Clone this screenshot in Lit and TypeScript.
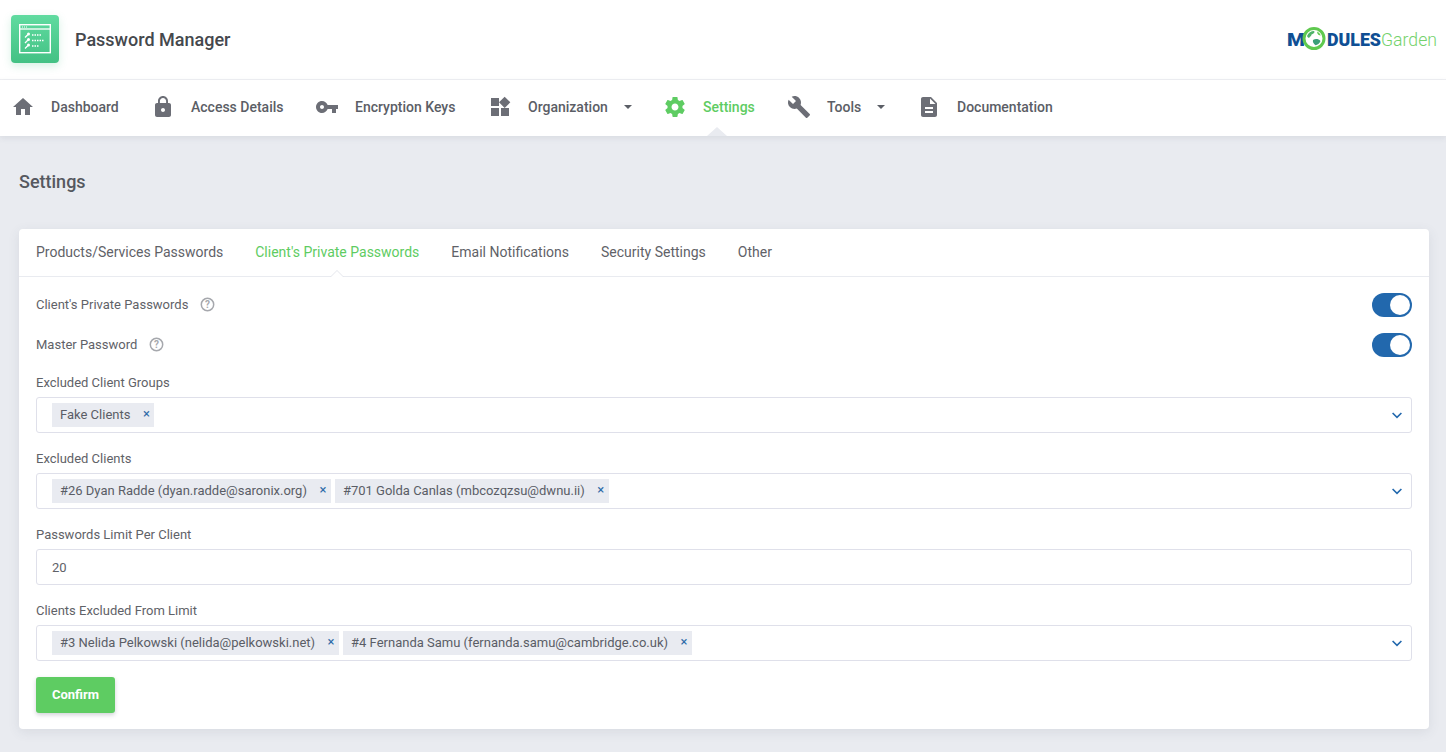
import { LitElement, html, css, svg } from "lit";
import { customElement } from "lit/decorators.js";

const navIcons: Record<string, any> = {
  home: svg`<path d="M10 20v-6h4v6h5v-8h3L12 3 2 12h3v8z"/>`,
  lock: svg`<path d="M18 8h-1V6c0-2.76-2.24-5-5-5S7 3.24 7 6v2H6c-1.1 0-2 .9-2 2v10c0 1.1.9 2 2 2h12c1.1 0 2-.9 2-2V10c0-1.1-.9-2-2-2zm-6 9c-1.1 0-2-.9-2-2s.9-2 2-2 2 .9 2 2-.9 2-2 2zm3.1-9H8.9V6c0-1.71 1.39-3.1 3.1-3.1 1.71 0 3.1 1.39 3.1 3.1v2z"/>`,
  key: svg`<path d="M12.65 10C11.83 7.67 9.61 6 7 6c-3.31 0-6 2.69-6 6s2.69 6 6 6c2.61 0 4.83-1.67 5.65-4H17v4h4v-4h2v-4H12.65zM7 14c-1.1 0-2-.9-2-2s.9-2 2-2 2 .9 2 2-.9 2-2 2z"/>`,
  widgets: svg`<path d="M13 13v8h8v-8h-8zM3 21h8v-8H3v8zM3 3v8h8V3H3zm13.66-1.31L11 7.34 16.66 13l5.66-5.66-5.66-5.65z"/>`,
  gear: svg`<path d="M19.43 12.98c.04-.32.07-.64.07-.98s-.03-.66-.07-.98l2.11-1.65c.19-.15.24-.42.12-.64l-2-3.46c-.12-.22-.39-.3-.61-.22l-2.49 1c-.52-.4-1.08-.73-1.69-.98l-.38-2.65C14.46 2.18 14.25 2 14 2h-4c-.25 0-.46.18-.49.42l-.38 2.65c-.61.25-1.17.59-1.69.98l-2.49-1c-.23-.09-.49 0-.61.22l-2 3.46c-.13.22-.07.49.12.64l2.11 1.65c-.04.32-.07.65-.07.98s.03.66.07.98l-2.11 1.65c-.19.15-.24.42-.12.64l2 3.46c.12.22.39.3.61.22l2.49-1c.52.4 1.08.73 1.69.98l.38 2.65c.03.24.24.42.49.42h4c.25 0 .46-.18.49-.42l.38-2.65c.61-.25 1.17-.59 1.69-.98l2.49 1c.23.09.49 0 .61-.22l2-3.46c.12-.22.07-.49-.12-.64l-2.11-1.65zM12 15.5c-1.93 0-3.5-1.57-3.5-3.5s1.57-3.5 3.5-3.5 3.5 1.57 3.5 3.5-1.57 3.5-3.5 3.5z"/>`,
  wrench: svg`<path d="M22.7 19l-9.1-9.1c.9-2.3.4-5-1.5-6.9-2-2-5-2.4-7.4-1.3L9 6 6 9 1.6 4.7C.4 7.1.9 10.1 2.9 12.1c1.9 1.9 4.6 2.4 6.9 1.5l9.1 9.1c.4.4 1 .4 1.4 0l2.3-2.3c.5-.4.5-1.1.1-1.4z"/>`,
  doc: svg`<path d="M14 2H6c-1.1 0-2 .9-2 2v16c0 1.1.9 2 2 2h12c1.1 0 2-.9 2-2V8l-6-6zm2 16H8v-2h8v2zm0-4H8v-2h8v2zm-3-5V3.5L18.5 9H13z"/>`,
};

const nav = [
  { icon: "home", label: "Dashboard", w: 140 },
  { icon: "lock", label: "Access Details", w: 164 },
  { icon: "key", label: "Encryption Keys", w: 173 },
  { icon: "widgets", label: "Organization", caret: true, w: 175 },
  { icon: "gear", label: "Settings", active: true, w: 124 },
  { icon: "wrench", label: "Tools", caret: true, w: 130 },
  { icon: "doc", label: "Documentation" },
];

const tabs = ["Products/Services Passwords", "Client's Private Passwords", "Email Notifications", "Security Settings", "Other"];

@customElement("app-root")
export class AppRoot extends LitElement {
  static styles = css`
    :host {
      display: flex;
      flex-direction: column;
      min-height: 752px;
      background: #e9ebf0;
      font-family: Roboto, "Liberation Sans", sans-serif;
      color: #5c5f66;
    }
    .top {
      height: 80px;
      box-sizing: border-box;
      background: #fff;
      border-bottom: 1px solid #eff0f3;
      display: flex;
      align-items: center;
      justify-content: space-between;
      padding: 0 2px 1px 11px;
    }
    .brand { display: flex; align-items: center; gap: 16px; }
    .app-icon {
      width: 48px;
      height: 48px;
      border-radius: 4px;
      background: linear-gradient(180deg, #60dba0, #43c184);
      box-shadow: 0 3px 8px rgba(70, 190, 130, .22);
      display: flex;
      align-items: center;
      justify-content: center;
    }
    .title { font-size: 18px; font-weight: 500; color: #45484d; }
    .mg { display: block; }
    .nav {
      height: 56px;
      box-sizing: border-box;
      background: #fff;
      display: flex;
      align-items: center;
      padding-left: 11px;
      box-shadow: 0 2px 6px rgba(70, 75, 95, .1);
      position: relative;
    }
    .nav-item {
      display: flex;
      align-items: center;
      height: 100%;
      box-sizing: border-box;
      padding-bottom: 2px;
      font-size: 14px;
      font-weight: 500;
      color: #5b5e66;
      position: relative;
      flex: none;
    }
    .nav-item svg.i { width: 24px; height: 24px; fill: #6c6e76; flex: none; margin-right: 16px; }
    .nav-item.active { color: #5ecc62; }
    .nav-item.active svg.i { fill: #5ecc62; }
    .nav-item.active::after {
      content: "";
      position: absolute;
      left: 44px;
      bottom: 0;
      border-left: 10px solid transparent;
      border-right: 10px solid transparent;
      border-bottom: 9px solid #e9ebf0;
    }
    .caret {
      width: 0;
      height: 0;
      margin-left: 16px;
      border-left: 4px solid transparent;
      border-right: 4px solid transparent;
      border-top: 4px solid #5b5e66;
    }
    .page-title {
      font-size: 18px;
      font-weight: 500;
      color: #55585f;
      margin: 0;
      padding: 35px 19px 0;
      line-height: 22px;
    }
    .card {
      margin: 36px 17px 0 19px;
      height: 500px;
      background: #fff;
      border-radius: 4px;
      box-shadow: 0 3px 12px rgba(70, 75, 95, .1);
      box-sizing: border-box;
    }
    .tabs {
      height: 48px;
      box-sizing: border-box;
      border-bottom: 1px solid #e9ebf0;
      display: flex;
      align-items: center;
      gap: 32px;
      padding-left: 17px;
      font-size: 14px;
      color: #5f6268;
    }
    .tab { position: relative; line-height: 47px; }
    .tab.active { color: #5ecc62; }
    .tab.active::after, .tab.active::before {
      content: "";
      position: absolute;
      left: calc(50% - 7px);
      width: 0;
      height: 0;
      border-left: 7px solid transparent;
      border-right: 7px solid transparent;
    }
    .tab.active::before { bottom: -1px; border-bottom: 7px solid #e4e6ec; }
    .tab.active::after { bottom: -2px; border-bottom: 7px solid #fff; }
    .body { padding: 0 17px; display: flex; flex-direction: column; font-size: 13px; color: #5f6268; }
    .sw-row { height: 40px; display: flex; align-items: center; justify-content: space-between; }
    .sw-row.first { margin-top: 8px; }
    .sw-row.last { margin-bottom: 10px; }
    .sw-label { display: flex; align-items: center; gap: 12px; padding-bottom: 2px; }
    .help { width: 15px; height: 15px; display: block; }
    .switch {
      width: 40px;
      height: 24px;
      border-radius: 12px;
      background: #2268ad;
      display: flex;
      align-items: center;
      justify-content: flex-end;
      padding-right: 2px;
      box-sizing: border-box;
    }
    .knob { width: 20px; height: 20px; background: #fff; border-radius: 50%; }
    .field-label { line-height: 16px; }
    .field { margin-bottom: 18px; display: flex; flex-direction: column; gap: 6px; }
    .control {
      height: 36px;
      box-sizing: border-box;
      border: 1px solid #dfe0ea;
      border-radius: 3px;
      display: flex;
      align-items: center;
      padding: 0 6px 0 15px;
      gap: 4px;
      background: #fff;
    }
    .control.input { color: #5f6268; }
    .chip {
      height: 24px;
      box-sizing: border-box;
      background: #e9ebf1;
      display: flex;
      align-items: center;
      padding: 0 0 2px 8px;
      font-size: 13px;
      color: #5a5d66;
      white-space: nowrap;
    }
    .chip .x { width: 16px; margin-left: 8px; text-align: center; color: #2c6aa8; font-size: 13px; line-height: 24px; font-weight: 400; }
    .chev { margin-left: auto; width: 16px; height: 16px; flex: none; }
    .btn {
      width: 79px;
      height: 36px;
      box-sizing: border-box;
      align-self: flex-start;
      margin-top: -2px;
      background: #5ecc62;
      border: 0;
      border-radius: 3px;
      color: #fff;
      font: 700 13px Roboto, "Liberation Sans", sans-serif;
      box-shadow: 0 2px 4px rgba(70, 75, 95, .25);
      padding: 0 0 2px;
    }
  `;

  private chips(list: string[]) {
    return list.map((c) => html`<span class="chip">${c}<span class="x">×</span></span>`);
  }

  private chevron() {
    return html`<svg class="chev" viewBox="0 0 16 16"><path d="M3.6 6l4.4 4.4L12.4 6" fill="none" stroke="#2268ad" stroke-width="1.6"/></svg>`;
  }

  private help() {
    return html`<svg class="help" viewBox="0 0 15 15"><circle cx="7.5" cy="7.5" r="6.2" fill="none" stroke="#a6a8ad" stroke-width="1.5"/><text x="7.5" y="11" text-anchor="middle" font-size="10" font-weight="700" fill="#a6a8ad" font-family="Roboto">?</text></svg>`;
  }

  private logo() {
    return html`<svg class="mg" width="160" height="26" viewBox="0 0 160 26">
      <text x="3" y="19.5" font-family="Roboto" font-weight="900" font-size="19" fill="#0f4f94" textLength="18" lengthAdjust="spacingAndGlyphs">M</text>
      <circle cx="30" cy="12.5" r="10" fill="#fff" stroke="#5fc94f" stroke-width="3"/>
      <path d="M23 10c1.500-3.500 4-5 7-5 1.500 1.500-1 3-2.500 3.500 0 2-1.500 1.500-2 3-1 .8-1.800 0-2.500-1.500z" fill="#4fb36a"/>
      <path d="M29 14c2.500-1.500 5.500-1.200 7.500 1-1 2.500-3 4-5 4.200-2-1.500-3-3-2.500-5.200z" fill="#3a9f78"/>
      <path d="M33 5.500c1.800.8 3 2 3.800 4-1.800 0-3.500-1-3.800-4z" fill="#5fc94f"/>
      <text x="43" y="19.500" font-family="Roboto" font-weight="900" font-size="19" fill="#0f4f94" textLength="54" lengthAdjust="spacingAndGlyphs">DULES</text>
      <text x="97" y="19.500" font-family="Roboto" font-weight="300" font-size="18" fill="#74d26c" textLength="56" lengthAdjust="spacingAndGlyphs">Garden</text>
    </svg>`;
  }

  render() {
    return html`
      <div class="top">
        <div class="brand">
          <div class="app-icon">
            <svg width="32" height="30" viewBox="0 0 32 30" fill="none" stroke="#fff">
              <rect x=".7" y=".7" width="30.600" height="28" stroke-width="1.400"/>
              <path d="M1 5h30" stroke-width="1.300"/>
              <path d="M3 3h6" stroke-width="1" stroke-dasharray="1 1"/>
              <g stroke-width="1.300">
                <path d="M6 13.500l3-3M6 19l3-3M6 24.500l3-3"/>
                <path d="M13 11h9M13 16.500h12M13 22h7" stroke-dasharray="1.500 1"/>
              </g>
              <g fill="#fff" stroke="none">
                <circle cx="9.500" cy="10" r="1.500"/>
                <circle cx="9.500" cy="15.500" r="1.500"/>
                <circle cx="9.500" cy="21" r="1.500"/>
              </g>
            </svg>
          </div>
          <span class="title">Password Manager</span>
        </div>
        ${this.logo()}
      </div>
      <nav class="nav">
        ${nav.map(
          (n) => html`<div class="nav-item ${n.active ? "active" : ""}" style=${n.w ? `width:${n.w}px` : ""}>
            <svg class="i" viewBox="0 0 24 24">${navIcons[n.icon]}</svg>
            <span>${n.label}</span>
            ${n.caret ? html`<span class="caret"></span>` : ""}
          </div>`
        )}
      </nav>
      <h1 class="page-title">Settings</h1>
      <section class="card">
        <div class="tabs">
          ${tabs.map((t, i) => html`<span class="tab ${i === 1 ? "active" : ""}">${t}</span>`)}
        </div>
        <div class="body">
          <div class="sw-row first">
            <span class="sw-label">Client's Private Passwords ${this.help()}</span>
            <span class="switch"><span class="knob"></span></span>
          </div>
          <div class="sw-row last">
            <span class="sw-label">Master Password ${this.help()}</span>
            <span class="switch"><span class="knob"></span></span>
          </div>
          <div class="field">
            <div class="field-label">Excluded Client Groups</div>
            <div class="control">${this.chips(["Fake Clients"])}${this.chevron()}</div>
          </div>
          <div class="field">
            <div class="field-label">Excluded Clients</div>
            <div class="control">${this.chips(["#26 Dyan Radde (dyan.radde@saronix.org)", "#701 Golda Canlas (mbcozqzsu@dwnu.ii)"])}${this.chevron()}</div>
          </div>
          <div class="field">
            <div class="field-label">Passwords Limit Per Client</div>
            <div class="control input">20</div>
          </div>
          <div class="field">
            <div class="field-label">Clients Excluded From Limit</div>
            <div class="control">${this.chips(["#3 Nelida Pelkowski (nelida@pelkowski.net)", "#4 Fernanda Samu (fernanda.samu@cambridge.co.uk)"])}${this.chevron()}</div>
          </div>
          <button class="btn">Confirm</button>
        </div>
      </section>
    `;
  }
}
